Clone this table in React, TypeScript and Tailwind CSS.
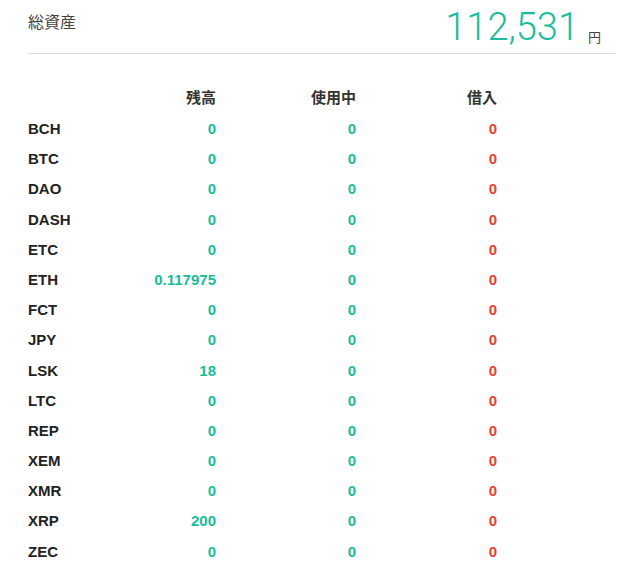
import React from "react";

interface Balance {
  code: string;
  amount: string;
  inUse: string;
  borrowed: string;
}

const balances: Balance[] = [
  { code: "BCH", amount: "0", inUse: "0", borrowed: "0" },
  { code: "BTC", amount: "0", inUse: "0", borrowed: "0" },
  { code: "DAO", amount: "0", inUse: "0", borrowed: "0" },
  { code: "DASH", amount: "0", inUse: "0", borrowed: "0" },
  { code: "ETC", amount: "0", inUse: "0", borrowed: "0" },
  { code: "ETH", amount: "0.117975", inUse: "0", borrowed: "0" },
  { code: "FCT", amount: "0", inUse: "0", borrowed: "0" },
  { code: "JPY", amount: "0", inUse: "0", borrowed: "0" },
  { code: "LSK", amount: "18", inUse: "0", borrowed: "0" },
  { code: "LTC", amount: "0", inUse: "0", borrowed: "0" },
  { code: "REP", amount: "0", inUse: "0", borrowed: "0" },
  { code: "XEM", amount: "0", inUse: "0", borrowed: "0" },
  { code: "XMR", amount: "0", inUse: "0", borrowed: "0" },
  { code: "XRP", amount: "200", inUse: "0", borrowed: "0" },
  { code: "ZEC", amount: "0", inUse: "0", borrowed: "0" },
];

const font = {
  fontFamily: '"Liberation Sans", "Noto Sans CJK JP", sans-serif',
};

const App = () => {
  return (
    <div className="w-[640px] h-[577px] bg-white overflow-hidden" style={font}>
      <div className="ml-[28px] mr-[25px]">
        <div className="flex items-start justify-between h-[54px] border-b border-[#d9d9d9]">
          <div className="mt-[13px] text-[16px] leading-[20px] text-[#444]">総資産</div>
          <div className="flex items-end mt-[5px] mr-[14px]">
            <span
              className="text-[38px] leading-[44px] text-[#1bbc9b]"
              style={{ fontFamily: 'Roboto, "Liberation Sans", sans-serif', fontWeight: 300 }}
            >
              112,531
            </span>
            <span className="ml-[9px] mb-[3px] text-[13px] leading-[16px] text-[#444]">円</span>
          </div>
        </div>

        <div className="mt-[34px] text-[15px] font-bold">
          <div className="grid grid-cols-[48px_140px_140px_141px] h-[20px] leading-[20px] text-[#333]">
            <div></div>
            <div className="text-right">残高</div>
            <div className="text-right">使用中</div>
            <div className="text-right">借入</div>
          </div>
          <div className="mt-[11px]">
            {balances.map((row) => (
              <div
                key={row.code}
                className="grid grid-cols-[48px_140px_140px_141px] h-[30.2px] leading-[20px]"
              >
                <div className="text-[#222]">{row.code}</div>
                <div className="text-right text-[#1bbc9b]">{row.amount}</div>
                <div className="text-right text-[#1bbc9b]">{row.inUse}</div>
                <div className="text-right text-[#e8412f]">{row.borrowed}</div>
              </div>
            ))}
          </div>
        </div>
      </div>
    </div>
  );
};

export default App;
